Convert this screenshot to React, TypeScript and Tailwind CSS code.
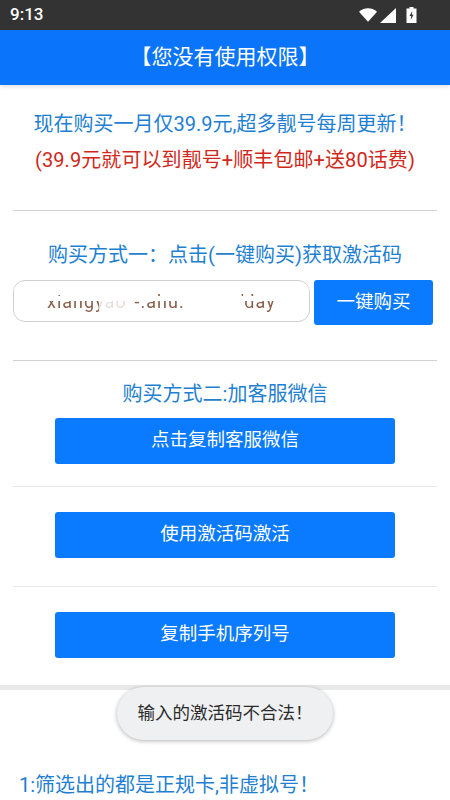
import React from "react"

const font = { fontFamily: '"Roboto", "Noto Sans CJK SC", sans-serif' }

function Rule({ className }: { className: string }) {
  return <div className={`mx-[13px] h-px ${className}`} />
}

function WideButton({ label }: { label: string }) {
  return (
    <button className="mx-auto flex h-[46px] w-[340px] items-center justify-center rounded-[3px] bg-[#0a7aff] text-[18.5px] text-white">
      {label}
    </button>
  )
}

export default function App() {
  return (
    <div className="relative h-[800px] w-[450px] overflow-hidden bg-white" style={font}>
      {/* Status bar */}
      <div className="flex h-[30px] items-center justify-between bg-[#333333] pl-[10px] pr-[33px] text-white">
        <span className="text-[17px] font-medium">9:13</span>
        <div className="flex items-center gap-[2px]">
          <svg width="19" height="14" viewBox="0 0 20 14"><path d="M0 3.500C5.500-1.200 13.500-1.200 19 3.500L9.500 14Z" fill="#fff" /></svg>
          <svg width="16" height="15" viewBox="0 0 16 15"><path d="M16 0V15H0Z" fill="#fff" /></svg>
          <svg className="ml-[8px]" width="11" height="16" viewBox="0 0 11 16">
            <path d="M3.500 0H7.500V1.500H10.500V16H0.500V1.500H3.500Z" fill="#fff" />
            <path d="M6.300 4L3.500 9H5.200L4.700 13L7.500 7.800H5.800Z" fill="#333" />
          </svg>
        </div>
      </div>

      {/* Header */}
      <div className="flex h-[55px] items-center justify-center bg-[#0a75fa] text-[21px] text-white shadow-[0_2px_4px_rgba(0,0,0,0.12)]">
        【您没有使用权限】
      </div>

      {/* Offer */}
      <div className="flex h-[125px] flex-col items-center pt-[27px]">
        <p className="text-[20px] leading-[24px] text-[#1f7fd1]">现在购买一月仅39.9元,超多靓号每周更新！</p>
        <p className="mt-[12px] text-[20px] leading-[24px] tracking-[0.08px] text-[#d0281a]">(39.9元就可以到靓号+顺丰包邮+送80话费)</p>
      </div>
      <Rule className="bg-[#d2d2d2]" />

      {/* Method one */}
      <p className="mt-[31px] text-center text-[20px] leading-[26px] text-[#1f7fd1]">购买方式一：点击(一键购买)获取激活码</p>
      <div className="mt-[12px] flex items-start gap-[4px] pl-[13px]">
        <div className="relative flex h-[42px] w-[297px] items-center overflow-hidden rounded-[12px] border-[1.5px] border-[#d0d0d0] pl-[33px] text-[18px] tracking-[1px] text-[#8a5f4c]">
          <span className="blur-[0.4px]">xiangyao</span>
          <span className="ml-[8px] blur-[0.4px]">-.ahu.</span>
          <span className="ml-[56px] blur-[0.4px]">'day</span>
          {/* the value is scrubbed out in the picture, only scraps of it show */}
          <div className="absolute inset-x-0 top-[4px] h-[9px] bg-white" />
          <div className="absolute inset-x-0 top-[15px] h-[5px] bg-white" />
          <div className="absolute left-[85px] top-[20px] h-[10px] w-[30px] bg-white/80" />
          <div className="absolute left-[175px] top-[13px] h-[20px] w-[50px] bg-white" />
        </div>
        <button className="flex h-[45px] w-[119px] items-center justify-center rounded-[3px] bg-[#0a7aff] text-[18.5px] text-white">
          一键购买
        </button>
      </div>
      <Rule className="mt-[35px] bg-[#d2d2d2]" />

      {/* Method two */}
      <p className="mt-[20px] text-center text-[20px] leading-[26px] text-[#1f7fd1]">购买方式二:加客服微信</p>
      <div className="mt-[11px]"><WideButton label="点击复制客服微信" /></div>
      <Rule className="mt-[22px] bg-[#e8e8e8]" />
      <div className="mt-[25px]"><WideButton label="使用激活码激活" /></div>
      <Rule className="mt-[28px] bg-[#e8e8e8]" />
      <div className="mt-[25px]"><WideButton label="复制手机序列号" /></div>

      <div className="mt-[27px] h-[5px] bg-[#e9e9e9]" />

      <p className="mt-[82px] pl-[19px] text-[20px] leading-[26px] text-[#1f7fd1]">1:筛选出的都是正规卡,非虚拟号！</p>

      {/* Toast */}
      <div className="absolute left-[117px] top-[687px] flex h-[53px] w-[216px] items-center justify-center rounded-full bg-[#eff0f2] text-[17.5px] text-[#2c2c2c] shadow-[0_1px_4px_rgba(0,0,0,0.3)]">
        输入的激活码不合法！
      </div>
    </div>
  )
}
